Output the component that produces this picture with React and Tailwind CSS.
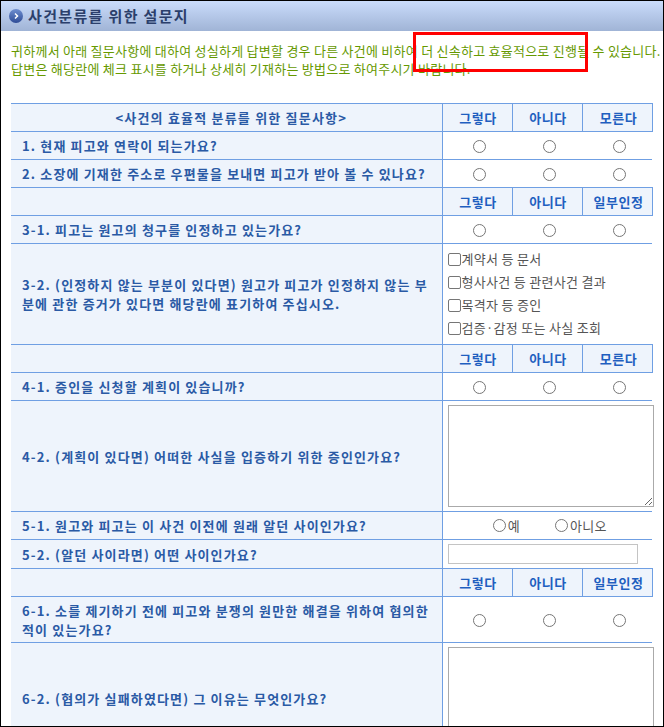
const font = { fontFamily: '"Noto Sans CJK KR", sans-serif' };

function Radio() {
  return <span className="block w-[13px] h-[13px] rounded-full border border-[#767676] bg-white shrink-0" />;
}

function RadioCell() {
  return (
    <td className="border-y border-[#6f9fe3] p-0">
      <div className="flex justify-center pl-[4px] pt-px"><Radio /></div>
    </td>
  );
}

function Check({ label }) {
  return (
    <div className="flex items-center h-[23px] text-[13px] tracking-[0.3px] text-[#555]">
      <span className="w-[13px] h-[13px] ml-[5px] mr-px rounded-[2px] border border-[#767676] bg-white shrink-0 mt-0.5" />
      {label}
    </div>
  );
}

function HeadCells({ last = "모른다" }) {
  return (
    <>
      <td className="border border-[#6f9fe3] bg-[#eef4fc] text-center font-bold text-[13px] tracking-[0.5px] text-[#1f5fc0] pl-[2px] pr-0 py-0">그렇다</td>
      <td className="border border-[#6f9fe3] bg-[#eef4fc] text-center font-bold text-[13px] tracking-[0.5px] text-[#1f5fc0] pl-[2px] pr-0 py-0">아니다</td>
      <td className="border border-[#6f9fe3] bg-[#eef4fc] text-center font-bold text-[13px] tracking-[0.5px] text-[#1f5fc0] pl-[3px] pr-0 py-0">{last}</td>
    </>
  );
}

function RadioCells() {
  return (
    <>
      <RadioCell />
      <RadioCell />
      <RadioCell />
    </>
  );
}

function Question({ children }) {
  return (
    <td className="border border-l-0 border-[#6f9fe3] bg-[#eef4fc] pl-[11px] pr-[12px] py-0 font-bold text-[13px] tracking-[1.15px] leading-[19px] text-[#2a5aa5]">
      {children}
    </td>
  );
}

function Blank() {
  return <td className="border border-l-0 border-[#6f9fe3] bg-[#eef4fc] p-0" />;
}

export default function App() {
  return (
    <div className="relative w-[664px] h-[727px] overflow-hidden bg-white border border-black" style={font}>
      <div className="flex items-center gap-[5px] h-[30px] pl-2 bg-gradient-to-b from-[#cadcfb] to-[#a0b4d6]">
        <span className="flex items-center justify-center w-[14px] h-[14px] rounded-full bg-gradient-to-b from-[#6f8fd0] to-[#2f4c96]">
          <svg width="8" height="8" viewBox="0 0 8 8">
            <path d="M3 1.5 5.5 4 3 6.5" fill="none" stroke="#fff" strokeWidth="1.5" />
          </svg>
        </span>
        <h1 className="font-bold text-[15px] tracking-[1.35px] text-[#2b3f6b] whitespace-nowrap">사건분류를 위한 설문지</h1>
      </div>

      <div className="pl-[10px] pt-[11px] text-[13px] tracking-[0.25px] leading-[18px] text-[#669900] whitespace-nowrap">
        <p>귀하께서 아래 질문사항에 대하여 성실하게 답변할 경우 다른 사건에 비하여 더 신속하고 효율적으로 진행될 수 있습니다.</p>
        <p>답변은 해당란에 체크 표시를 하거나 상세히 기재하는 방법으로 하여주시기 바랍니다.</p>
      </div>

      <table className="ml-[10px] mt-[25px] w-[641px] table-fixed border-collapse">
        <colgroup>
          <col className="w-[431px]" />
          <col className="w-[70px]" />
          <col className="w-[70px]" />
          <col className="w-[70px]" />
        </colgroup>
        <tbody>
          <tr className="h-[28px]">
            <td className="border border-l-0 border-[#6f9fe3] bg-[#eef4fc] text-center font-bold text-[13px] tracking-[1.2px] text-[#2a5aa5] pl-[10px] pr-0 py-0">&lt;사건의 효율적 분류를 위한 질문사항&gt;</td>
            <HeadCells />
          </tr>
          <tr className="h-[28px]"><Question>1. 현재 피고와 연락이 되는가요?</Question><RadioCells /></tr>
          <tr className="h-[28px]"><Question>2. 소장에 기재한 주소로 우편물을 보내면 피고가 받아 볼 수 있나요?</Question><RadioCells /></tr>
          <tr className="h-[28px]"><Blank /><HeadCells last="일부인정" /></tr>
          <tr className="h-[28px]"><Question>3-1. 피고는 원고의 청구를 인정하고 있는가요?</Question><RadioCells /></tr>
          <tr className="h-[101px]">
            <Question>3-2. (인정하지 않는 부분이 있다면) 원고가 피고가 인정하지 않는 부분에 관한 증거가 있다면 해당란에 표기하여 주십시오.</Question>
            <td colSpan={3} className="border-y border-[#6f9fe3] pb-[2px] px-0 pt-0">
              <Check label="계약서 등 문서" />
              <Check label="형사사건 등 관련사건 결과" />
              <Check label="목격자 등 증인" />
              <Check label="검증·감정 또는 사실 조회" />
            </td>
          </tr>
          <tr className="h-[28px]"><Blank /><HeadCells /></tr>
          <tr className="h-[28px]"><Question>4-1. 증인을 신청할 계획이 있습니까?</Question><RadioCells /></tr>
          <tr className="h-[111px]">
            <Question>4-2. (계획이 있다면) 어떠한 사실을 입증하기 위한 증인인가요?</Question>
            <td colSpan={3} className="border-y border-[#6f9fe3] pl-[5px] py-0">
              <textarea className="block w-[206px] h-[102px] border border-[#aaa] bg-white" />
            </td>
          </tr>
          <tr className="h-[28px]">
            <Question>5-1. 원고와 피고는 이 사건 이전에 원래 알던 사이인가요?</Question>
            <td colSpan={3} className="border-y border-[#6f9fe3] p-0">
              <div className="flex items-center justify-center gap-[35px] text-[13px] tracking-[0.3px] text-[#555] pl-[5px]">
                <span className="flex items-center gap-[2px]"><Radio />예</span>
                <span className="flex items-center gap-[2px]"><Radio />아니오</span>
              </div>
            </td>
          </tr>
          <tr className="h-[29px]">
            <Question>5-2. (알던 사이라면) 어떤 사이인가요?</Question>
            <td colSpan={3} className="border-y border-[#6f9fe3] pl-[5px] py-0">
              <input className="block w-[190px] h-[20px] border border-[#c4c4c4] bg-white" />
            </td>
          </tr>
          <tr className="h-[28px]"><Blank /><HeadCells last="일부인정" /></tr>
          <tr className="h-[46px]"><Question>6-1. 소를 제기하기 전에 피고와 분쟁의 원만한 해결을 위하여 협의한 적이 있는가요?</Question><RadioCells /></tr>
          <tr className="h-[112px]">
            <Question>6-2. (협의가 실패하였다면) 그 이유는 무엇인가요?</Question>
            <td colSpan={3} className="border-t border-[#6f9fe3] pl-[5px] py-0 align-top">
              <textarea className="block mt-1 w-[206px] h-[102px] border border-[#aaa] bg-white" />
            </td>
          </tr>
        </tbody>
      </table>

      <div className="absolute left-[412px] top-[31px] w-[175px] h-[40px] border-[3px] border-[#f00]" />
    </div>
  );
}
